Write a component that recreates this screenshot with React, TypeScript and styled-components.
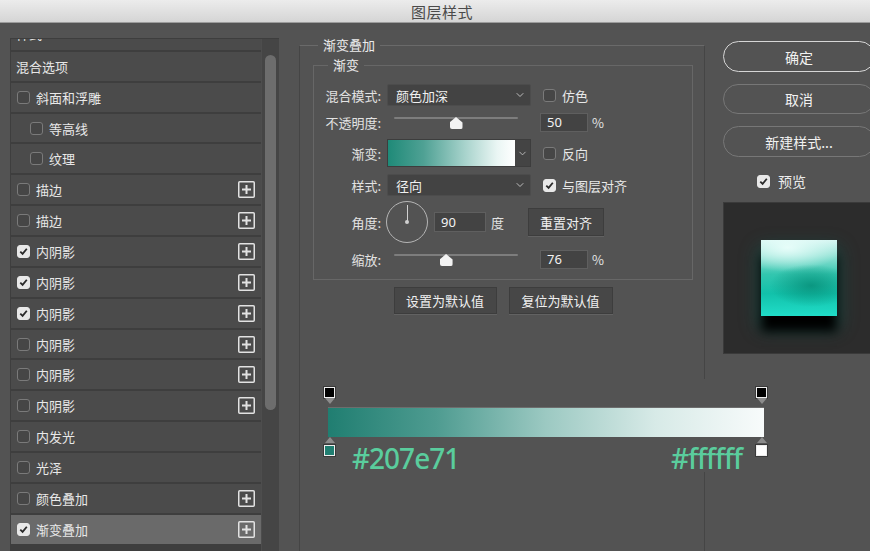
import React from 'react';
import styled, { createGlobalStyle } from 'styled-components';
import { ChevronDown } from 'lucide-react';

const GlobalStyle = createGlobalStyle`
  html, body {
    margin: 0;
    padding: 0;
    background: #535353;
  }
  body {
    font-family: 'Noto Sans CJK SC', 'Noto Sans', sans-serif;
  }
  * {
    box-sizing: border-box;
  }
`;

const Window = styled.div`
  position: relative;
  width: 870px;
  height: 551px;
  overflow: hidden;
  background: #535353;
  color: #e6e6e6;
  font-size: 13px;
`;

const TitleBar = styled.div`
  height: 23px;
  display: flex;
  align-items: center;
  justify-content: center;
  padding-left: 14px;
  background: linear-gradient(#ececec, #d5d5d5);
  border-bottom: 1px solid #9c9c9c;
  color: #4a4a4a;
  font-size: 15px;
  letter-spacing: 0.5px;
`;

const Body = styled.div`
  display: flex;
  align-items: flex-start;
  padding: 15px 0 0 10px;
  height: 528px;
`;

/* ---------- left: style list ---------- */

const StyleList = styled.div`
  display: flex;
  width: 269px;
  height: 520px;
  padding: 1px 0 0 1px;
  background: #3e3e3e;
`;

const ListViewport = styled.div`
  width: 250px;
  height: 100%;
  overflow: hidden;
`;

const ListTrack = styled.div`
  display: flex;
  flex-direction: column;
  gap: 2px;
  margin-top: -18px;
`;

const ListRow = styled.div<{ $indent?: number; $selected?: boolean }>`
  display: flex;
  align-items: center;
  height: 28.87px;
  flex-shrink: 0;
  padding: 0 6px 0 ${(p) => p.$indent ?? 6}px;
  background: ${(p) => (p.$selected ? '#6a6a6a' : '#4b4b4b')};
  color: #e8e8e8;
  font-size: 13px;
  white-space: nowrap;
`;

const RowLabel = styled.span<{ $lift?: boolean }>`
  flex: 1;
  ${(p) => (p.$lift ? 'margin-top: -4px;' : '')}
`;

const ScrollTrack = styled.div`
  width: 18px;
  height: 100%;
  padding: 16px 0 0 3px;
  background: #454545;
  border-left: 1px solid #4d4d4d;
`;

const ScrollThumb = styled.div`
  width: 11px;
  height: 355px;
  border-radius: 6px;
  background: #6d6d6d;
`;

const Box = styled.span<{ $checked?: boolean }>`
  display: inline-flex;
  align-items: center;
  justify-content: center;
  width: 13px;
  height: 13px;
  margin-right: 6px;
  flex-shrink: 0;
  border-radius: 3px;
  border: 1px solid ${(p) => (p.$checked ? '#e8e8e8' : '#7a7a7a')};
  background: ${(p) => (p.$checked ? '#e8e8e8' : '#464646')};
`;

const Check = ({ checked }: { checked?: boolean }) => (
  <Box $checked={checked}>
    {checked && (
      <svg width="9" height="9" viewBox="0 0 9 9">
        <path d="M1.3 4.6 L3.6 6.9 L7.8 1.8" fill="none" stroke="#2a2a2a" strokeWidth="1.8" />
      </svg>
    )}
  </Box>
);

const PlusIcon = () => (
  <svg width="17" height="17" viewBox="0 0 17 17">
    <rect x="0.75" y="0.75" width="15.5" height="15.5" rx="1" fill="none" stroke="#e2e2e2" strokeWidth="1.5" />
    <path d="M8.5 4 V13 M4 8.5 H13" stroke="#e2e2e2" strokeWidth="2" />
  </svg>
);

type Item = { label: string; check?: boolean; checked?: boolean; indent?: boolean; plus?: boolean; selected?: boolean };

const items: Item[] = [
  { label: '样式' },
  { label: '混合选项' },
  { label: '斜面和浮雕', check: true },
  { label: '等高线', check: true, indent: true },
  { label: '纹理', check: true, indent: true },
  { label: '描边', check: true, plus: true },
  { label: '描边', check: true, plus: true },
  { label: '内阴影', check: true, checked: true, plus: true },
  { label: '内阴影', check: true, checked: true, plus: true },
  { label: '内阴影', check: true, checked: true, plus: true },
  { label: '内阴影', check: true, plus: true },
  { label: '内阴影', check: true, plus: true },
  { label: '内阴影', check: true, plus: true },
  { label: '内发光', check: true },
  { label: '光泽', check: true },
  { label: '颜色叠加', check: true, plus: true },
  { label: '渐变叠加', check: true, checked: true, plus: true, selected: true },
];

/* ---------- center: gradient overlay settings ---------- */

const Center = styled.div`
  margin: -1px 0 0 20px;
`;

const OuterSet = styled.fieldset`
  width: 406px;
  height: 560px;
  margin: 0;
  padding: 0;
  border: 1px solid #454545;
  border-top-color: #6a6a6a;
  border-bottom: none;
`;

const Legend = styled.legend<{ $offset: number }>`
  margin-left: ${(p) => p.$offset}px;
  padding: 0 5px;
  font-size: 13px;
  line-height: 16px;
  color: #ececec;
`;

const OuterContent = styled.div`
  padding: 4px 11px 0 13px;
`;

const InnerSet = styled.fieldset`
  width: 380px;
  margin: 0;
  padding: 0;
  border: 1px solid #676767;
`;

const InnerContent = styled.div`
  padding: 9px 0 5px 0;
`;

const FormRow = styled.div<{ $h: number }>`
  display: flex;
  align-items: center;
  height: ${(p) => p.$h}px;
`;

const FieldLabel = styled.span`
  width: 67px;
  margin-right: 6px;
  text-align: right;
  color: #e2e2e2;
  white-space: nowrap;
`;

const Select = styled.div`
  display: flex;
  align-items: center;
  justify-content: space-between;
  width: 144px;
  height: 22px;
  padding: 0 4px 0 8px;
  background: #434343;
  border: 1px solid #4c4c4c;
  border-radius: 2px;
  color: #f0f0f0;
  svg {
    color: #bdbdbd;
  }
`;

const Toggle = styled.label`
  display: flex;
  align-items: center;
  margin-left: 12px;
  color: #e8e8e8;
`;

const NumberBox = styled.div<{ $w: number; $h: number }>`
  display: flex;
  align-items: center;
  width: ${(p) => p.$w}px;
  height: ${(p) => p.$h}px;
  padding-left: 6px;
  background: #434343;
  border: 1px solid #5f5f5f;
  color: #f2f2f2;
  font-family: 'Noto Sans', sans-serif;
  font-size: 13px;
`;

const Unit = styled.span<{ $gap: number }>`
  margin-left: ${(p) => p.$gap}px;
  color: #e2e2e2;
`;

const SliderBox = styled.div`
  position: relative;
  width: 153px;
  height: 100%;
`;

const SliderLine = styled.div`
  position: absolute;
  left: 7px;
  top: calc(50% - 5px);
  width: 124px;
  height: 2px;
  border-radius: 1px;
  background: #7d7d7d;
`;

const SliderThumb = styled.div<{ $pos: number }>`
  position: absolute;
  top: calc(50% - 5px);
  left: ${(p) => 7 + p.$pos * 124 - 6.5}px;
  width: 13px;
  height: 12px;
  background: #f2f2f2;
  clip-path: polygon(50% 0, 100% 45%, 100% 100%, 0 100%, 0 45%);
  border-radius: 0 0 2px 2px;
`;

const Slider = ({ pos }: { pos: number }) => (
  <SliderBox>
    <SliderLine />
    <SliderThumb $pos={pos} />
  </SliderBox>
);

const GradientPicker = styled.div`
  display: flex;
  width: 144px;
  height: 28px;
  border: 1px solid #3d3d3d;
`;

const Swatch = styled.div`
  flex: 1;
  background: linear-gradient(to right, #1f8a78 0%, #4fa194 28%, #a6d2cb 60%, #eaf6f4 86%, #ffffff 100%);
`;

const SwatchDrop = styled.div`
  display: flex;
  align-items: center;
  justify-content: center;
  width: 15px;
  background: #444444;
  color: #bdbdbd;
`;

const Dial = styled.div`
  position: relative;
  width: 42px;
  height: 42px;
  margin-left: -1px;
  border-radius: 50%;
  border: 1px solid #b5b5b5;

  &::before {
    content: '';
    position: absolute;
    left: 19.5px;
    top: 3px;
    width: 1px;
    height: 17px;
    background: #d0d0d0;
  }
  &::after {
    content: '';
    position: absolute;
    left: 18px;
    top: 18px;
    width: 4px;
    height: 4px;
    border-radius: 50%;
    background: #d0d0d0;
  }
`;

const FlatButton = styled.button<{ $w: number; $h: number }>`
  width: ${(p) => p.$w}px;
  height: ${(p) => p.$h}px;
  padding: 0;
  background: #474747;
  border: 1px solid #3d3d3d;
  box-shadow: 0 1px 0 #626262;
  color: #f0f0f0;
  font-family: 'Noto Sans CJK SC', sans-serif;
  font-size: 13px;
`;

const ButtonRow = styled.div`
  display: flex;
  justify-content: center;
  gap: 12px;
  margin-top: 7px;
`;

/* ---------- right: actions + preview ---------- */

const Side = styled.div`
  display: flex;
  flex-direction: column;
  margin: 3px 0 0 18px;
  width: 152px;
  flex-shrink: 0;
`;

const PillButton = styled.button<{ $primary?: boolean; $gap?: number; $h?: number }>`
  width: 152px;
  height: ${(p) => p.$h ?? 31}px;
  margin-top: ${(p) => p.$gap ?? 0}px;
  padding: 0;
  border-radius: 16px;
  background: transparent;
  border: 1.5px solid ${(p) => (p.$primary ? '#d6d6d6' : '#777777')};
  color: #f2f2f2;
  font-family: 'Noto Sans CJK SC', sans-serif;
  font-size: 14px;
`;

const PreviewToggle = styled.label`
  display: flex;
  align-items: center;
  height: 20px;
  margin: 14px 0 0 34px;
  font-size: 14px;
  color: #ececec;
  span:first-child {
    margin-right: 8px;
  }
`;

const PreviewBox = styled.div`
  display: flex;
  align-items: center;
  justify-content: center;
  width: 152px;
  height: 152px;
  margin-top: 11px;
  background: #2c2c2c;
  border: 1px solid #3a3a3a;
`;

const PreviewSquare = styled.div`
  width: 76px;
  height: 76px;
  background:
    radial-gradient(ellipse 55% 28% at 66% 60%, rgba(6, 140, 118, 0.8), rgba(6, 140, 118, 0)),
    radial-gradient(ellipse 70% 32% at 35% 10%, rgba(236, 255, 252, 0.9), rgba(236, 255, 252, 0)),
    linear-gradient(to bottom, #d6f6f2 0%, #95e3d6 20%, #33c6af 45%, #12c1aa 70%, #20ddc8 100%);
  box-shadow: 0 16px 10px 0 rgba(0, 0, 0, 1), 0 10px 18px 2px rgba(0, 120, 105, 0.45);
`;

/* ---------- gradient editor callout ---------- */

const GradientEditor = styled.div`
  position: absolute;
  left: 320px;
  top: 379px;
  width: 452px;
  height: 93px;
  padding: 8px 0 0 8px;
  background: #535353;
`;

const StopRow = styled.div`
  display: flex;
  justify-content: space-between;
  align-items: flex-start;
  width: 443px;
  margin-left: -4px;
`;

const Stop = styled.div<{ $below?: boolean }>`
  display: flex;
  flex-direction: ${(p) => (p.$below ? 'column-reverse' : 'column')};
  align-items: center;
  width: 11px;
`;

const StopSquare = styled.div<{ $fill: string }>`
  width: 11px;
  height: 11px;
  background: ${(p) => p.$fill};
  border: 1.5px solid #eeeeee;
  outline: 1px solid #3a3a3a;
`;

const StopArrow = styled.div<{ $up?: boolean }>`
  width: 0;
  height: 0;
  border-left: 5px solid transparent;
  border-right: 5px solid transparent;
  ${(p) => (p.$up ? 'border-bottom: 6px solid #8c8c8c;' : 'border-top: 6px solid #8c8c8c;')}
  margin: ${(p) => (p.$up ? '0 0 2px' : '0')};
`;

const GradientBar = styled.div`
  width: 436px;
  height: 30px;
  margin-top: 3px;
  background: linear-gradient(to right, #207e71 0%, #4f9c91 25%, #9cc9c2 50%, #d7eae7 75%, #f8fbfb 100%);
  border-top: 1px solid #6d6d6d;
`;

const HexLabel = styled.span<{ $left?: number; $right?: number }>`
  margin: 7px ${(p) => p.$right ?? 0}px 0 ${(p) => p.$left ?? 0}px;
  font-family: 'Noto Sans', sans-serif;
  font-size: 28px;
  font-weight: 500;
  line-height: 28px;
  letter-spacing: -1px;
  color: #5acd9d;
`;

const Spacer = styled.div`
  flex: 1;
`;

const App = () => (
  <Window>
    <GlobalStyle />
    <TitleBar>图层样式</TitleBar>
    <Body>
      <StyleList>
        <ListViewport>
          <ListTrack>
            {items.map((it, i) => (
              <ListRow key={i} $indent={it.indent ? 19 : it.check ? 6 : 5} $selected={it.selected}>
                {it.check && <Check checked={it.checked} />}
                <RowLabel $lift={i === 0}>{it.label}</RowLabel>
                {it.plus && <PlusIcon />}
              </ListRow>
            ))}
          </ListTrack>
        </ListViewport>
        <ScrollTrack>
          <ScrollThumb />
        </ScrollTrack>
      </StyleList>

      <Center>
        <OuterSet>
          <Legend $offset={18}>渐变叠加</Legend>
          <OuterContent>
            <InnerSet>
              <Legend $offset={14}>渐变</Legend>
              <InnerContent>
                <FormRow $h={26}>
                  <FieldLabel>混合模式:</FieldLabel>
                  <Select>
                    颜色加深
                    <ChevronDown size={12} strokeWidth={2} />
                  </Select>
                  <Toggle>
                    <Check />
                    仿色
                  </Toggle>
                </FormRow>
                <FormRow $h={28}>
                  <FieldLabel>不透明度:</FieldLabel>
                  <Slider pos={0.5} />
                  <NumberBox $w={48} $h={19}>50</NumberBox>
                  <Unit $gap={4}>%</Unit>
                </FormRow>
                <FormRow $h={34}>
                  <FieldLabel>渐变:</FieldLabel>
                  <GradientPicker>
                    <Swatch />
                    <SwatchDrop>
                      <ChevronDown size={11} strokeWidth={2} />
                    </SwatchDrop>
                  </GradientPicker>
                  <Toggle>
                    <Check />
                    反向
                  </Toggle>
                </FormRow>
                <FormRow $h={30}>
                  <FieldLabel>样式:</FieldLabel>
                  <Select>
                    径向
                    <ChevronDown size={12} strokeWidth={2} />
                  </Select>
                  <Toggle>
                    <Check checked />
                    与图层对齐
                  </Toggle>
                </FormRow>
                <FormRow $h={44}>
                  <FieldLabel>角度:</FieldLabel>
                  <Dial />
                  <Unit $gap={6}>
                    <NumberBox $w={52} $h={20}>90</NumberBox>
                  </Unit>
                  <Unit $gap={5}>度</Unit>
                  <Unit $gap={24}>
                    <FlatButton $w={76} $h={28}>重置对齐</FlatButton>
                  </Unit>
                </FormRow>
                <FormRow $h={30}>
                  <FieldLabel>缩放:</FieldLabel>
                  <Slider pos={0.42} />
                  <NumberBox $w={48} $h={19}>76</NumberBox>
                  <Unit $gap={4}>%</Unit>
                </FormRow>
              </InnerContent>
            </InnerSet>
            <ButtonRow>
              <FlatButton $w={103} $h={27}>设置为默认值</FlatButton>
              <FlatButton $w={104} $h={27}>复位为默认值</FlatButton>
            </ButtonRow>
          </OuterContent>
        </OuterSet>
      </Center>

      <Side>
        <PillButton $primary>确定</PillButton>
        <PillButton $gap={12} $h={30}>取消</PillButton>
        <PillButton $gap={12}>新建样式...</PillButton>
        <PreviewToggle>
          <Check checked />
          <span>预览</span>
        </PreviewToggle>
        <PreviewBox>
          <PreviewSquare />
        </PreviewBox>
      </Side>
    </Body>

    <GradientEditor>
      <StopRow>
        <Stop>
          <StopSquare $fill="#000000" />
          <StopArrow />
        </Stop>
        <Stop>
          <StopSquare $fill="#000000" />
          <StopArrow />
        </Stop>
      </StopRow>
      <GradientBar />
      <StopRow>
        <Stop $below>
          <StopSquare $fill="#207e71" />
          <StopArrow $up />
        </Stop>
        <HexLabel $left={17}>#207e71</HexLabel>
        <Spacer />
        <HexLabel $right={14}>#ffffff</HexLabel>
        <Stop $below>
          <StopSquare $fill="#ffffff" />
          <StopArrow $up />
        </Stop>
      </StopRow>
    </GradientEditor>
  </Window>
);

export default App;
